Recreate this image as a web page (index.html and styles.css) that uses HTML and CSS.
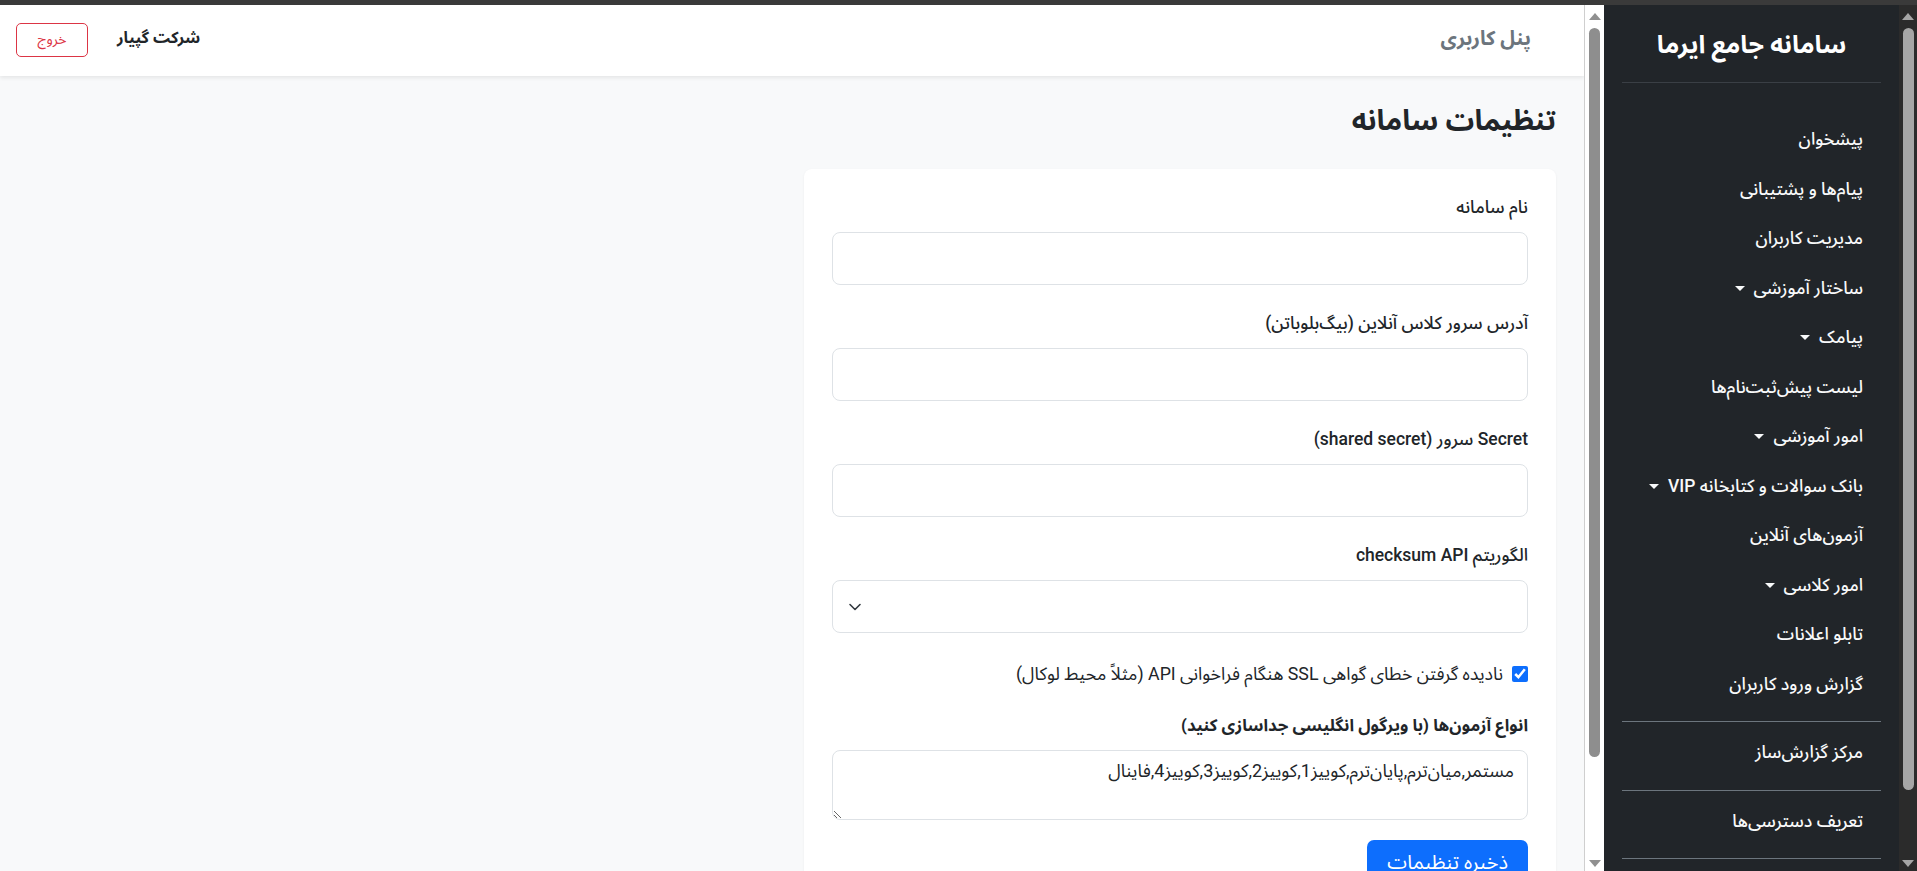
FILE: index.html
```html
<!DOCTYPE html>
<html lang="fa" dir="rtl">
<head>
    <meta charset="UTF-8">
    <meta name="viewport" content="width=device-width, initial-scale=1.0">
    <title>تنظیمات سامانه</title>
    <link rel="stylesheet" href="styles.css">
</head>
<body>
    <div class="topbar"></div>
    <div class="layout">
        <div class="sidebar-wrap">
            <div class="vscroll dark">
                <span class="arrow up"></span>
                <span class="thumb"></span>
                <span class="arrow down"></span>
            </div>
            <aside class="sidebar">
                <div class="brand">سامانه جامع ایرما</div>
                <ul class="nav">
                    <li><a class="nav-link" href="#">پیشخوان</a></li>
                    <li><a class="nav-link" href="#">پیام‌ها و پشتیبانی</a></li>
                    <li><a class="nav-link" href="#">مدیریت کاربران</a></li>
                    <li><a class="nav-link dropdown" href="#">ساختار آموزشی</a></li>
                    <li><a class="nav-link dropdown" href="#">پیامک</a></li>
                    <li><a class="nav-link" href="#">لیست پیش‌ثبت‌نام‌ها</a></li>
                    <li><a class="nav-link dropdown" href="#">امور آموزشی</a></li>
                    <li><a class="nav-link dropdown" href="#">بانک سوالات و کتابخانه VIP</a></li>
                    <li><a class="nav-link" href="#">آزمون‌های آنلاین</a></li>
                    <li><a class="nav-link dropdown" href="#">امور کلاسی</a></li>
                    <li><a class="nav-link" href="#">تابلو اعلانات</a></li>
                    <li><a class="nav-link" href="#">گزارش ورود کاربران</a></li>
                </ul>
                <hr class="divider">
                <a class="nav-link after-divider" href="#">مرکز گزارش‌ساز</a>
                <hr class="divider">
                <a class="nav-link after-divider" href="#">تعریف دسترسی‌ها</a>
                <hr class="divider">
            </aside>
        </div>

        <div class="main-wrap">
            <div class="vscroll light">
                <span class="arrow up"></span>
                <span class="thumb"></span>
                <span class="arrow down"></span>
            </div>
            <main class="main">
                <header class="header">
                    <div class="panel-title">پنل کاربری</div>
                    <div class="user-box">
                        <span class="company">شرکت گپیار</span>
                        <button class="btn-logout">خروج</button>
                    </div>
                </header>

                <h1 class="page-title">تنظیمات سامانه</h1>

                <form class="card">
                    <div class="form-group">
                        <label class="form-label">نام سامانه</label>
                        <input type="text" class="form-control">
                    </div>
                    <div class="form-group">
                        <label class="form-label">آدرس سرور کلاس آنلاین (بیگ‌بلوباتن)</label>
                        <input type="text" class="form-control">
                    </div>
                    <div class="form-group">
                        <label class="form-label">Secret سرور (shared secret)</label>
                        <input type="text" class="form-control">
                    </div>
                    <div class="form-group">
                        <label class="form-label">الگوریتم checksum API</label>
                        <div class="select-wrap">
                            <select class="form-control form-select">
                                <option></option>
                            </select>
                            <svg class="select-arrow" width="14" height="10" viewBox="0 0 14 10">
                                <path d="M2 2.5 L7 7.5 L12 2.5" fill="none" stroke="#343a40" stroke-width="1.6" stroke-linecap="round" stroke-linejoin="round"/>
                            </svg>
                        </div>
                    </div>
                    <div class="check-row">
                        <input type="checkbox" class="check" checked>
                        <span>نادیده گرفتن خطای گواهی SSL هنگام فراخوانی API (مثلاً محیط لوکال)</span>
                    </div>
                    <div class="form-group last">
                        <label class="form-label bold">انواع آزمون‌ها (با ویرگول انگلیسی جداسازی کنید)</label>
                        <textarea class="form-control textarea">مستمر,میان‌ترم,پایان‌ترم,کوییز1,کوییز2,کوییز3,کوییز4,فاینال</textarea>
                    </div>
                    <button type="button" class="btn-save">ذخیره تنظیمات</button>
                </form>
            </main>
        </div>
    </div>
</body>
</html>
```

FILE: styles.css
```css
* {
    margin: 0;
    padding: 0;
    box-sizing: border-box;
}

body {
    font-family: Roboto, "Noto Sans Arabic", "DejaVu Sans", sans-serif;
    background-color: #3a3a3a;
    color: #212529;
    height: 100vh;
    overflow: hidden;
}

.topbar {
    height: 5px;
    background-color: #3a3a3a;
}

.layout {
    display: flex;
    height: calc(100vh - 5px);
}

/* scrollbars (drawn, the panes themselves don't scroll here) */

.vscroll {
    display: flex;
    flex-direction: column;
    align-items: center;
    flex-shrink: 0;
}

.vscroll.light {
    width: 20px;
    background-color: #fff;
    border-left: 1px solid #cfcfcf;
}

.vscroll.dark {
    width: 18px;
    background-color: #2b2b2b;
}

.arrow {
    display: flex;
    align-items: center;
    justify-content: center;
    width: 100%;
}

.arrow.up {
    height: 23px;
}

.arrow.down {
    height: 16px;
    margin-top: auto;
}

.arrow::before {
    content: "";
    border-left: 6px solid transparent;
    border-right: 6px solid transparent;
}

.arrow.up::before {
    border-bottom: 7px solid #909090;
}

.arrow.down::before {
    border-top: 7px solid #909090;
}

.dark .arrow.up::before {
    border-bottom-color: #a6a6a6;
}

.dark .arrow.down::before {
    border-top-color: #a6a6a6;
}

.thumb {
    width: 11px;
    border-radius: 6px;
}

.light .thumb {
    height: 729px;
    background-color: #8e8e8e;
}

.dark .thumb {
    height: 762px;
    background-color: #a6a6a6;
    margin-left: 1px;
}

/* sidebar */

.sidebar-wrap {
    width: 313px;
    flex-shrink: 0;
    display: flex;
}

.sidebar {
    flex: 1;
    background-color: #212529;
    overflow: hidden;
}

.brand {
    color: #fff;
    font-size: 25px;
    font-weight: 700;
    text-align: center;
    line-height: 32px;
    padding: 24px 0 21px;
    border-bottom: 1px solid #3a3f45;
    margin: 0 18px;
}

.nav {
    list-style: none;
    padding-top: 32px;
}

.nav-link {
    display: block;
    color: #f8f9fa;
    text-decoration: none;
    font-size: 17.5px;
    font-weight: 500;
    line-height: 25.5px;
    padding: 12px 36px 12px 0;
    white-space: nowrap;
}

.nav-link.after-divider {
    padding-top: 13px;
}

.dropdown::after {
    content: "";
    display: inline-block;
    vertical-align: 3px;
    margin-right: 9px;
    border-top: 5px solid #f8f9fa;
    border-left: 5px solid transparent;
    border-right: 5px solid transparent;
}

.divider {
    border: none;
    border-top: 1px solid #6c757d;
    margin: 12px 18px 5px;
}

/* main */

.main-wrap {
    flex: 1;
    display: flex;
    min-width: 0;
}

.main {
    flex: 1;
    background-color: #f8f9fa;
    overflow: hidden;
}

.header {
    height: 71px;
    background-color: #fff;
    box-shadow: 0 2px 4px rgba(0, 0, 0, 0.08);
    display: flex;
    align-items: center;
    justify-content: space-between;
    padding: 0 53px 0 16px;
}

.panel-title {
    color: #6c757d;
    font-size: 20px;
    font-weight: 700;
    margin-top: -4px;
}

.user-box {
    display: flex;
    align-items: center;
    gap: 29px;
    margin-top: -2px;
}

.company {
    font-size: 16px;
    font-weight: 700;
    color: #212529;
    margin-top: -4px;
}

.btn-logout {
    width: 72px;
    height: 34px;
    background: none;
    border: 1px solid #dc3545;
    border-radius: 5px;
    color: #dc3545;
    font-family: inherit;
    font-size: 14px;
    cursor: pointer;
}

.page-title {
    font-size: 28.5px;
    font-weight: 700;
    line-height: 34px;
    margin: 28px 28px 31px;
}

.card {
    width: 752px;
    margin-right: 28px;
    background-color: #fff;
    border-radius: 8px;
    box-shadow: 0 1px 3px rgba(0, 0, 0, 0.05);
    padding: 26px 28px;
}

.form-group {
    margin-bottom: 26px;
}

.form-group.last {
    margin-bottom: 20px;
}

.form-label {
    display: block;
    font-size: 17.5px;
    font-weight: 500;
    line-height: 24px;
    margin-bottom: 13px;
}

.form-label.bold {
    font-size: 16.8px;
    font-weight: 700;
}

.form-control {
    display: block;
    width: 100%;
    height: 53px;
    border: 1px solid #dee2e6;
    border-radius: 8px;
    background-color: #fff;
    font-family: inherit;
    font-size: 18px;
    color: #212529;
    padding: 8px 13px;
}

.select-wrap {
    position: relative;
}

.form-select {
    appearance: none;
}

.select-arrow {
    position: absolute;
    left: 16px;
    top: 22px;
}

.check-row {
    display: flex;
    align-items: center;
    gap: 9px;
    height: 30px;
    font-size: 17.8px;
    margin-bottom: 24px;
}

.check {
    width: 16px;
    height: 16px;
    accent-color: #0d6efd;
    margin: 0;
}

.textarea {
    height: 70px;
    line-height: 24px;
    resize: vertical;
}

.btn-save {
    height: 46px;
    padding: 0 20px;
    background-color: #0d6efd;
    border: none;
    border-radius: 7px;
    color: #fff;
    font-family: inherit;
    font-size: 20px;
    cursor: pointer;
}
```
